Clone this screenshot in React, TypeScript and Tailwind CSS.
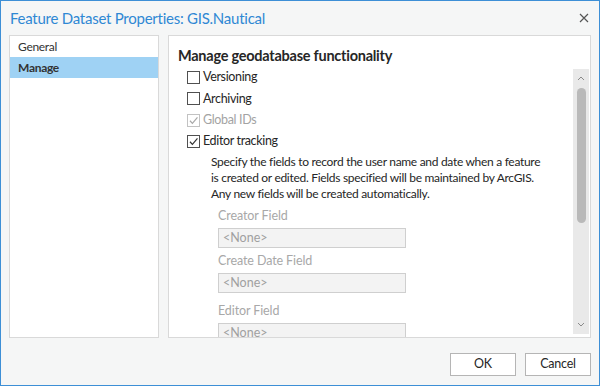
const font = { fontFamily: 'Lato, "Open Sans", sans-serif' };

function CheckBox({ checked, disabled }: { checked?: boolean; disabled?: boolean }) {
  return (
    <span
      className={`flex h-[13px] w-[13px] items-center justify-center border bg-white ${
        disabled ? "border-[#c2c2c2]" : "border-[#505050]"
      }`}
    >
      {checked && (
        <svg width="11" height="11" viewBox="0 0 10 10">
          <polyline
            points="1.8,5.2 4,7.6 8.6,2.2"
            fill="none"
            stroke={disabled ? "#a8a8a8" : "#333"}
            strokeWidth="1.1"
          />
        </svg>
      )}
    </span>
  );
}

function Row({ label, checked, disabled }: { label: string; checked?: boolean; disabled?: boolean }) {
  return (
    <div className="flex h-[21.3px] items-center gap-[3px]">
      <CheckBox checked={checked} disabled={disabled} />
      <span className={`text-[12.5px] tracking-[-0.35px] ${disabled ? "text-[#a3a3a3]" : "text-[#262626]"}`}>
        {label}
      </span>
    </div>
  );
}

function Field({ label, mt }: { label: string; mt: string }) {
  return (
    <div className={`pl-[31px] ${mt}`}>
      <div className="text-[12.5px] leading-[16px] tracking-[-0.1px] text-[#a8a8a8]">{label}</div>
      <div className="mt-[4px] flex h-[20px] w-[188px] items-center border border-[#cfcfcf] bg-[#f3f3f3] pl-[4px] text-[12.5px] text-[#a0a0a0]">
        &lt;None&gt;
      </div>
    </div>
  );
}

export default function App() {
  return (
    <div
      className="flex h-[386px] w-[600px] flex-col border border-[#3d8fd6] bg-[#f5f6f6]"
      style={font}
    >
      {/* Title bar */}
      <div className="flex h-[34px] items-center justify-between pl-[9px] pr-[10px]">
        <span className="text-[15px] tracking-[-0.25px] text-[#2f88d4]">Feature Dataset Properties: GIS.Nautical</span>
        <svg width="10" height="10" viewBox="0 0 10 10">
          <path d="M1 1L9 9M9 1L1 9" stroke="#555" strokeWidth="1.2" />
        </svg>
      </div>

      {/* Body */}
      <div className="flex h-[303px] gap-[9px] px-[8px]">
        <div className="w-[150px] border border-[#d9d9d9] bg-white">
          <div className="flex h-[21px] items-center pl-[8px] text-[12px] tracking-[-0.3px] text-[#333]">General</div>
          <div className="flex h-[21px] items-center bg-[#9fd2f4] pl-[8px] text-[12px] font-bold tracking-[-0.3px] text-[#333]">
            Manage
          </div>
        </div>

        <div className="flex flex-1 flex-col border border-[#d9d9d9] bg-white">
          <div className="pl-[9px] pt-[10px] text-[14.5px] font-bold leading-[20px] tracking-[-0.25px] text-[#262626]">
            Manage geodatabase functionality
          </div>
          <div className="flex min-h-0 flex-1 pt-[1px]">
            <div className="flex-1 overflow-hidden pl-[18px]">
              <Row label="Versioning" />
              <Row label="Archiving" />
              <Row label="Global IDs" checked disabled />
              <Row label="Editor tracking" checked />
              <p className="mt-[2px] pl-[24px] text-[12px] leading-[16px] tracking-[-0.3px] text-[#262626]">
                Specify the fields to record the user name and date when a feature
                <br />
                is created or edited. Fields specified will be maintained by ArcGIS.
                <br />
                Any new fields will be created automatically.
              </p>
              <Field label="Creator Field" mt="mt-[6px]" />
              <Field label="Create Date Field" mt="mt-[5px]" />
              <Field label="Editor Field" mt="mt-[10px]" />
            </div>
            <div className="mb-[3px] mr-[1px] mt-[2px] flex w-[16px] flex-col items-center bg-[#e9e9e9]">
              <svg width="8" height="14" viewBox="0 0 8 14" className="mt-[2px]">
                <polyline points="1,9 4,6 7,9" fill="none" stroke="#8a8a8a" strokeWidth="1" />
              </svg>
              <div className="mt-[3px] h-[135px] w-[9px] rounded-full bg-[#b9b9b9]" />
              <div className="flex-1" />
              <svg width="8" height="14" viewBox="0 0 8 14" className="mb-[2px]">
                <polyline points="1,5 4,8 7,5" fill="none" stroke="#8a8a8a" strokeWidth="1" />
              </svg>
            </div>
          </div>
        </div>
      </div>

      {/* Footer */}
      <div className="flex justify-end gap-[9px] pr-[8px] pt-[15px]">
        <button className="h-[23px] w-[66px] border border-[#b5b5b5] bg-white text-[12.5px] tracking-[-0.2px] text-[#262626]">OK</button>
        <button className="h-[23px] w-[66px] border border-[#b5b5b5] bg-white text-[12.5px] tracking-[-0.2px] text-[#262626]">Cancel</button>
      </div>
    </div>
  );
}
